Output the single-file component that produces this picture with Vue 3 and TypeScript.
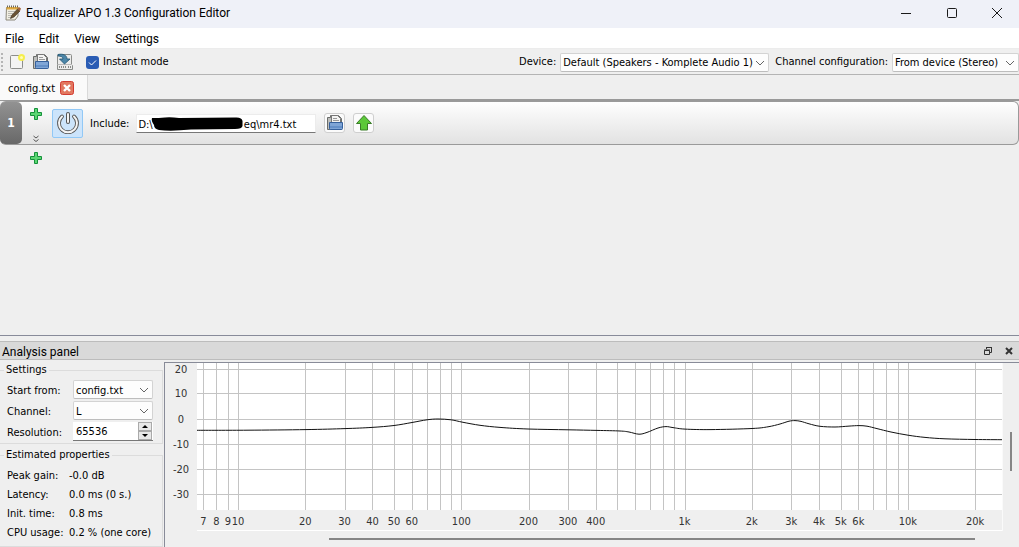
<script setup lang="ts">
import { computed, ref } from 'vue'

const menus = ['File', 'Edit', 'View', 'Settings']
const instantMode = ref(true)
const path = ref('D:\\' + '\u00a0'.repeat(29) + 'eq\\mr4.txt')
const resolution = ref(65536)

const properties = [
  { name: 'Peak gain:', value: '-0.0 dB' },
  { name: 'Latency:', value: '0.0 ms (0 s.)' },
  { name: 'Init. time:', value: '0.8 ms' },
  { name: 'CPU usage:', value: '0.2 % (one core)' },
]

const W = 805
const H = 147
const freqX = (f: number) => 41 + 223.3 * Math.log10(f / 10)

const levels = [
  { db: 20, y: 6 },
  { db: 10, y: 30 },
  { db: 0, y: 56 },
  { db: -10, y: 81 },
  { db: -20, y: 106 },
  { db: -30, y: 131 },
]

const gridFreqs: number[] = [7, 8, 9]
for (const decade of [10, 100, 1000]) {
  for (let i = 1; i < 10; i++) gridFreqs.push(decade * i)
}
gridFreqs.push(10000, 20000)

const labelFreqs = [7, 8, 9, 10, 20, 30, 40, 50, 60, 100, 200, 300, 400, 1000, 2000, 3000, 4000, 5000, 6000, 10000, 20000]
const freqLabels = labelFreqs.map((f) => ({
  text: f >= 1000 ? f / 1000 + 'k' : String(f),
  left: (freqX(f) / W) * 100 + '%',
}))

const response: [number, number][] = [
  [0, 67.3], [50, 67.2], [109, 66.6], [148, 65.6], [175, 64.4], [197, 62.5], [215, 59.5], [230, 56.8],
  [241, 56], [254, 56.8], [266, 59.3], [283, 62.3], [303, 64.4], [331, 66], [371, 66.8], [400, 67.4],
  [423, 68], [432, 69], [442, 71.2], [450, 69.4], [461, 65], [469, 63.6], [476, 64.6], [488, 66.1],
  [514, 66.6], [555, 65.5], [571, 63.8], [583, 61], [592, 58.2], [598, 57.6], [604, 58.4], [612, 60.8],
  [623, 63.3], [638, 64], [652, 63.1], [662, 62.6], [670, 63.2], [680, 65.6], [694, 69], [711, 72.2],
  [728, 74.4], [748, 75.8], [778, 76.5], [805, 76.7],
]

const curve = computed(() => {
  let d = `M${response[0][0]} ${response[0][1]}`
  for (let i = 0; i < response.length - 1; i++) {
    const a = response[Math.max(i - 1, 0)]
    const b = response[i]
    const c = response[i + 1]
    const e = response[Math.min(i + 2, response.length - 1)]
    d += ` C${b[0] + (c[0] - a[0]) / 6} ${b[1] + (c[1] - a[1]) / 6} ${c[0] - (e[0] - b[0]) / 6} ${c[1] - (e[1] - b[1]) / 6} ${c[0]} ${c[1]}`
  }
  return d
})
</script>

<template>
  <div class="window">
    <header class="titlebar">
      <svg class="app-icon" width="16" height="16" viewBox="0 0 16 16">
        <path d="M1.500 2.500h11.500v8.500l-3 4H1z" fill="#f1eee2" stroke="#8b877a" />
        <path d="M1.500 2h12v2.500h-12z" fill="#dfa93f" />
        <path d="M2.500 .5v2M4.500 .5v2M6.500 .5v2M8.500 .5v2M10.500 .5v2M12.500 .5v2" stroke="#6d6759" />
        <path d="M3 6.500h7M3 8.500h5M3 10.500h3M3 12.500h3" stroke="#b9b8b2" />
        <path d="M5.500 13.500 6.500 10.500 12.500 4l2.500 2L9 12z" fill="#6a5233" stroke="#3a3026" stroke-width=".6" />
        <path d="M12.500 4 14 2l2 1.500L15 6z" fill="#a5633a" />
      </svg>
      <h1>Equalizer APO 1.3 Configuration Editor</h1>
      <div class="win-buttons">
        <button type="button" aria-label="Minimize"><svg width="12" height="12" viewBox="0 0 12 12"><path d="M1 6.500h10" /></svg></button>
        <button type="button" aria-label="Maximize"><svg width="12" height="12" viewBox="0 0 12 12"><rect x="1.500" y="1.500" width="9" height="9" rx="1" /></svg></button>
        <button type="button" aria-label="Close"><svg width="12" height="12" viewBox="0 0 12 12"><path d="m1 1 10 10M11 1 1 11" /></svg></button>
      </div>
    </header>

    <nav class="menubar">
      <button v-for="m in menus" :key="m" type="button">{{ m }}</button>
    </nav>

    <div class="toolbar">
      <span class="grip"></span>
      <button type="button" class="tool" aria-label="New">
        <svg width="18" height="18" viewBox="0 0 18 18">
          <rect x="2.500" y="2.500" width="12" height="13" rx="1" fill="#f4f4f3" stroke="#8d8e8b" />
          <circle cx="13.500" cy="4.500" r="3.500" fill="#f5ee4d" />
          <circle cx="13.500" cy="4.500" r="1.500" fill="#fffdb8" />
        </svg>
      </button>
      <button type="button" class="tool" aria-label="Open">
        <svg width="18" height="18" viewBox="0 0 18 18">
          <path d="M1.500 15.500v-12h3v-2h8l3 3v11z" fill="#bdbebc" stroke="#6b6d6a" />
          <path d="M5.500 9V1.500h6l3 3V9z" fill="#f3f3f2" stroke="#777" />
          <path d="M7 4.500h4M7 6.500h6" stroke="#999" />
          <path d="M3.500 8.500h13v6q0 1-1 1h-11q-1 0-1-1z" fill="#7fa5d6" stroke="#35609c" />
          <path d="M4 12.500h12M4 13.500h12" stroke="#6590c8" />
        </svg>
      </button>
      <button type="button" class="tool" aria-label="Save">
        <svg width="18" height="18" viewBox="0 0 18 18">
          <path d="M1.500 11.500V2.500q0-1 1-1h12q1 0 1 1v9l1 1v4h-15z" fill="#ececeb" stroke="#8a8c89" />
          <path d="M2 11.500h14" stroke="#bbb" />
          <path d="M3 14h7M12 14h3" stroke="#8a8b88" stroke-dasharray="1 1" stroke-width="2" />
          <path d="M2 1.500c5-1 9 .5 9 4.500h3L8.500 11 3.500 6h3.500C7 4 5 3 2 3z" fill="#4c86a8" stroke="#1f5472" stroke-width=".8" />
        </svg>
      </button>
      <label class="instant">
        <input v-model="instantMode" type="checkbox" />
        <span class="tick"><svg v-if="instantMode" width="13" height="13" viewBox="0 0 13 13"><path d="m3 6.500 2.500 2.500L10 4.500" /></svg></span>
        <span>Instant mode</span>
      </label>
      <div class="devices">
        <label for="device">Device:</label>
        <span class="combo device">
          <select id="device"><option>Default (Speakers - Komplete Audio 1)</option></select>
          <svg width="10" height="6" viewBox="0 0 10 6"><path d="m1 1 4 4 4-4" /></svg>
        </span>
        <label for="chan-config">Channel configuration:</label>
        <span class="combo chan-config">
          <select id="chan-config"><option>From device (Stereo)</option></select>
          <svg width="10" height="6" viewBox="0 0 10 6"><path d="m1 1 4 4 4-4" /></svg>
        </span>
      </div>
    </div>

    <div class="tabs">
      <div class="tab">
        <span class="text">config.txt</span>
        <button type="button" aria-label="Close config.txt">
          <svg width="14" height="14" viewBox="0 0 14 14">
            <rect x=".5" y=".5" width="13" height="13" rx="2" fill="#e2775f" stroke="#d23c32" />
            <path d="m4 4 6 6M10 4l-6 6" stroke="#fff" stroke-width="2.400" />
          </svg>
        </button>
      </div>
    </div>

    <main class="work">
      <section class="filter">
        <div class="number">1</div>
        <div class="side">
          <button type="button" aria-label="Add filter">
            <svg width="12" height="12" viewBox="0 0 12 12"><path d="M4.500.5h3v4h4v3h-4v4h-3v-4h-4v-3h4z" fill="#5bd673" stroke="#15913a" /></svg>
          </button>
          <button type="button" aria-label="Expand">
            <svg width="6" height="8" viewBox="0 0 6 8"><path d="m.5 1 2.500 2 2.500-2M.5 4.500l2.500 2 2.500-2" fill="none" stroke="#555" /></svg>
          </button>
        </div>
        <button type="button" class="power" aria-label="Toggle filter">
          <svg width="24" height="24" viewBox="0 0 24 24">
            <path d="M6 5.500a9 9 0 1 0 12 0" fill="none" stroke="#555" stroke-width="3.800" stroke-linecap="round" />
            <path d="M12 3v8" stroke="#555" stroke-width="4" stroke-linecap="round" />
            <path d="M6 5.500a9 9 0 1 0 12 0" fill="none" stroke="#f4f4f4" stroke-width="2" stroke-linecap="round" />
            <path d="M12 3v8" stroke="#f4f4f4" stroke-width="2" stroke-linecap="round" />
          </svg>
        </button>
        <label class="text" for="include-path">Include:</label>
        <div class="path">
          <input id="include-path" v-model="path" type="text" />
          <svg class="redaction" width="92" height="16" viewBox="0 0 92 16">
            <path d="M1 2Q8 2 14 1.500T28 2L84 1.500Q91 1 91.500 5V10Q91 13 84 13L40 13.500Q20 15.500 8 14Q3 13 3 9Q0 5 1 2z" fill="#000" />
          </svg>
        </div>
        <button type="button" class="action" aria-label="Choose file">
          <svg width="18" height="18" viewBox="0 0 18 18">
            <path d="M1.500 15.500v-12h3v-2h8l3 3v11z" fill="#bdbebc" stroke="#6b6d6a" />
            <path d="M5.500 9V1.500h6l3 3V9z" fill="#f3f3f2" stroke="#777" />
            <path d="M7 4.500h4M7 6.500h6" stroke="#999" />
            <path d="M3.500 8.500h13v6q0 1-1 1h-11q-1 0-1-1z" fill="#7fa5d6" stroke="#35609c" />
            <path d="M4 12.500h12M4 13.500h12" stroke="#6590c8" />
          </svg>
        </button>
        <button type="button" class="action" aria-label="Open in editor">
          <svg width="18" height="18" viewBox="0 0 18 18"><path d="M9 1.500 16.500 9.500H12.500v6.500h-7V9.500H1.500z" fill="#5cc839" stroke="#3a7d28" stroke-linejoin="round" /></svg>
        </button>
      </section>
      <button type="button" class="append" aria-label="Append filter">
        <svg width="12" height="12" viewBox="0 0 12 12"><path d="M4.500.5h3v4h4v3h-4v4h-3v-4h-4v-3h4z" fill="#5bd673" stroke="#15913a" /></svg>
      </button>
    </main>

    <section class="analysis">
      <header class="dock-title">
        <h2>Analysis panel</h2>
        <button type="button" aria-label="Float"><svg width="10" height="10" viewBox="0 0 10 10"><path d="M3.500 3V1.500h5v5H7M3 1.500h6" /><path d="M1.500 4.500h5v4h-5zM1 4h6" /></svg></button>
        <button type="button" aria-label="Close panel"><svg width="10" height="10" viewBox="0 0 10 10"><path d="m2 2 6 6M8 2 2 8" stroke-width="2" /></svg></button>
      </header>
      <div class="dock-body">
        <aside>
          <fieldset class="settings">
            <legend>Settings</legend>
            <label class="text" for="start">Start from:</label>
            <span class="combo">
              <select id="start"><option>config.txt</option></select>
              <svg width="10" height="6" viewBox="0 0 10 6"><path d="m1 1 4 4 4-4" /></svg>
            </span>
            <label class="text" for="channel">Channel:</label>
            <span class="combo">
              <select id="channel"><option>L</option></select>
              <svg width="10" height="6" viewBox="0 0 10 6"><path d="m1 1 4 4 4-4" /></svg>
            </span>
            <label class="text" for="resolution">Resolution:</label>
            <span class="spin">
              <input id="resolution" v-model="resolution" type="number" />
              <span class="steps">
                <button type="button" aria-label="Increase" @click="resolution *= 2"><svg width="6" height="3" viewBox="0 0 6 3"><path d="M0 3 3 0l3 3z" /></svg></button>
                <button type="button" aria-label="Decrease" @click="resolution /= 2"><svg width="6" height="3" viewBox="0 0 6 3"><path d="m0 0 3 3 3-3z" /></svg></button>
              </span>
            </span>
          </fieldset>
          <fieldset class="estimates">
            <legend>Estimated properties</legend>
            <dl>
              <template v-for="p in properties" :key="p.name">
                <dt>{{ p.name }}</dt>
                <dd>{{ p.value }}</dd>
              </template>
            </dl>
          </fieldset>
        </aside>
        <div class="graph">
          <div class="db-axis">
            <span v-for="l in levels" :key="l.db" class="text" :style="{ top: (l.y / H) * 100 + '%' }">{{ l.db }}</span>
          </div>
          <svg class="plot" :viewBox="`0 0 ${W} ${H}`" preserveAspectRatio="none" role="img" aria-label="Frequency response">
            <g class="grid">
              <line v-for="f in gridFreqs" :key="f" :x1="Math.round(freqX(f)) + 0.5" :x2="Math.round(freqX(f)) + 0.5" y1="0" :y2="H" />
              <line v-for="l in levels" :key="l.db" x1="0" :x2="W" :y1="l.y + 0.5" :y2="l.y + 0.5" />
            </g>
            <path class="curve" :d="curve" />
          </svg>
          <div class="freq-axis">
            <span v-for="l in freqLabels" :key="l.text" :style="{ left: l.left }">{{ l.text }}</span>
          </div>
          <div class="vscroll"><i></i></div>
          <div class="hscroll"><i></i></div>
        </div>
      </div>
    </section>
  </div>
</template>

<style>
body {
  margin: 0;
}
</style>

<style scoped>
.window {
  display: flex;
  flex-direction: column;
  height: 100vh;
  overflow: hidden;
  background: #efefef;
  color: #000;
  font: 11px/14px "DejaVu Sans Condensed", "Noto Sans", sans-serif;
}
.window * {
  box-sizing: border-box;
}
button {
  display: flex;
  align-items: center;
  justify-content: center;
  padding: 0;
  border: 0;
  background: none;
  color: inherit;
  font: inherit;
}
input,
select {
  font: inherit;
  color: inherit;
}
svg {
  display: block;
  flex: none;
}
.text {
  padding-top: 2px;
}
.titlebar {
  display: flex;
  align-items: center;
  flex: none;
  height: 28px;
  padding-left: 5px;
  padding-bottom: 3px;
  background: #eff1f8;
}
h1 {
  flex: 1;
  margin: 0 0 0 5px;
  font: 12px/16px Roboto, "Noto Sans", sans-serif;
}
.win-buttons {
  display: flex;
}
.win-buttons button {
  width: 46px;
  height: 25px;
}
.win-buttons button:last-child {
  width: 44px;
}
.win-buttons path,
.win-buttons rect {
  fill: none;
  stroke: #1a1a1a;
}
.menubar {
  display: flex;
  flex: none;
  gap: 15px;
  height: 21px;
  padding: 2px 0 0 5px;
  background: #fff;
  border-bottom: 1px solid #ececec;
  font: 12px/16px Roboto, "Noto Sans", sans-serif;
}
.toolbar {
  display: flex;
  align-items: center;
  flex: none;
  height: 26px;
  padding-top: 1px;
  border-bottom: 1px solid #b4b4b4;
}
.grip {
  width: 2px;
  height: 18px;
  margin: 0 5px 0 1px;
  background: repeating-linear-gradient(#b5b5b5 0 2px, #efefef 2px 4px);
}
.tool {
  width: 18px;
  height: 18px;
  margin-right: 6px;
}
.instant {
  display: flex;
  align-items: center;
  gap: 4px;
  margin-left: 6px;
}
.instant input {
  position: absolute;
  opacity: 0;
}
.tick {
  width: 13px;
  height: 13px;
  border-radius: 3px;
  background: #2a5cb4;
}
.tick path {
  fill: none;
  stroke: #fff;
}
.devices {
  display: flex;
  align-items: center;
  gap: 4px;
  margin-left: auto;
}
.combo {
  position: relative;
  display: block;
  height: 19px;
}
.combo select {
  width: 100%;
  height: 100%;
  padding: 2px 14px 0 2px;
  appearance: none;
  border: 1px solid #d3d3d3;
  border-bottom-color: #bdbdbd;
  border-radius: 2px;
  background: #fdfdfd;
}
.combo svg {
  position: absolute;
  right: 4px;
  top: 7px;
  pointer-events: none;
}
.combo path {
  fill: none;
  stroke: #666;
}
.device {
  width: 209px;
  margin-right: 2px;
}
.chan-config {
  width: 127px;
}
.tabs {
  flex: none;
  display: flex;
  height: 26px;
  border-bottom: 2px solid #999;
}
.tab {
  display: flex;
  align-items: center;
  gap: 5px;
  width: 88px;
  height: 25px;
  padding-left: 8px;
  background: #fafafa;
  border-right: 1px solid #d9d9d9;
}
.work {
  flex: 1;
  min-height: 0;
}
.filter {
  display: flex;
  align-items: center;
  height: 44px;
  border: 1px solid #9a9a9a;
  border-left: 0;
  border-radius: 6px;
  background: linear-gradient(#fefefe, #e2e2e2);
}
.number {
  display: flex;
  align-items: center;
  justify-content: center;
  align-self: stretch;
  width: 22px;
  border-radius: 5px;
  background: linear-gradient(#929292, #686868);
  color: #fff;
  font-weight: bold;
  font-size: 12px;
}
.side {
  display: flex;
  flex-direction: column;
  align-items: center;
  justify-content: space-between;
  height: 42px;
  width: 28px;
  padding: 6px 0 1px;
}
.power {
  width: 31px;
  height: 29px;
  margin: 0 7px 0 2px;
  border: 1px solid #91c8f6;
  border-radius: 2px;
  background: #cce4fb;
}
.path {
  position: relative;
  width: 180px;
  margin: 0 8px 0 7px;
}
.path input {
  display: block;
  width: 100%;
  height: 19px;
  padding: 2px 1px 0;
  border: 1px solid #ececec;
  border-bottom-color: #777;
  background: #fff;
}
.redaction {
  position: absolute;
  left: 15px;
  top: 2px;
}
.action {
  width: 21px;
  height: 20px;
  margin-right: 8px;
  border: 1px solid #cfcfcf;
  border-radius: 3px;
  background: #fbfbfb;
}
.append {
  margin: 7px 0 0 30px;
}
.analysis {
  flex: none;
  border-top: 1px solid #888b9a;
  padding-top: 5px;
}
.dock-title {
  display: flex;
  align-items: center;
  height: 19px;
  padding: 0 5px 0 2px;
  border: solid #bcbcbc;
  border-width: 1px 0;
  background: #d9d9d9;
}
h2 {
  flex: 1;
  margin: 0;
  padding-top: 2px;
  font: 12px/16px Roboto, "Noto Sans", sans-serif;
}
.dock-title button {
  margin-left: 11px;
}
.dock-title path {
  fill: none;
  stroke: #333;
}
.dock-body {
  display: flex;
  height: 187px;
  padding-top: 2px;
}
aside {
  display: flex;
  flex-direction: column;
  gap: 4px;
  width: 164px;
  padding: 1px 1px 0 0;
}
fieldset {
  margin: 0;
  min-width: 0;
  border: 1px solid #dcdcdc;
  border-left: 0;
}
legend {
  margin-left: -3px;
  padding: 0 2px;
}
.settings {
  display: grid;
  grid-template-columns: 66px 80px;
  grid-auto-rows: 19px;
  align-items: center;
  gap: 2px 0;
  padding: 3px 0 2px 7px;
}
.spin {
  display: flex;
  height: 19px;
  padding-right: 1px;
  background: #fff;
  border-bottom: 1px solid #777;
}
.spin input {
  flex: 1;
  min-width: 0;
  padding: 2px 3px 0;
  border: 0;
  background: none;
  appearance: textfield;
}
.spin input::-webkit-inner-spin-button {
  display: none;
}
.steps {
  display: flex;
  flex-direction: column;
  width: 14px;
}
.steps button {
  flex: 1;
  border: 1px solid #aaa;
  background: #e8e8e8;
}
.estimates {
  flex: 1;
  padding: 4px 0 0 7px;
}
dl {
  display: grid;
  grid-template-columns: 62px 1fr;
  margin: 0;
  line-height: 19px;
  white-space: nowrap;
}
dd {
  margin: 0;
}
.graph {
  flex: 1;
  display: grid;
  grid-template: 147px 21px 1fr / 32px 1fr 17px;
  border: solid #888b98;
  border-width: 1px 0 0 1px;
  color: #333;
}
.db-axis {
  position: relative;
}
.db-axis span {
  position: absolute;
  left: 16px;
  transform: translate(-50%, -50%);
}
.plot {
  width: 100%;
  height: 100%;
  background: #fff;
}
.grid {
  stroke: #c4c4c4;
  shape-rendering: crispEdges;
}
.grid line,
.curve {
  vector-effect: non-scaling-stroke;
}
.curve {
  fill: none;
  stroke: #111;
}
.freq-axis {
  position: relative;
  grid-area: 2 / 2;
  border-bottom: 1px solid #fff;
}
.freq-axis span {
  position: absolute;
  top: 5px;
  transform: translateX(-50%);
}
.vscroll {
  grid-area: 1 / 3 / 3 / 4;
  border-left: 1px solid #fafafa;
  padding: 69px 0 0 7px;
}
.vscroll i {
  display: block;
  width: 2px;
  height: 39px;
  background: #868686;
}
.hscroll {
  grid-area: 3 / 1 / 4 / 3;
  padding: 7px 27px 0 164px;
}
.hscroll i {
  display: block;
  height: 2px;
  background: #868686;
}
</style>
